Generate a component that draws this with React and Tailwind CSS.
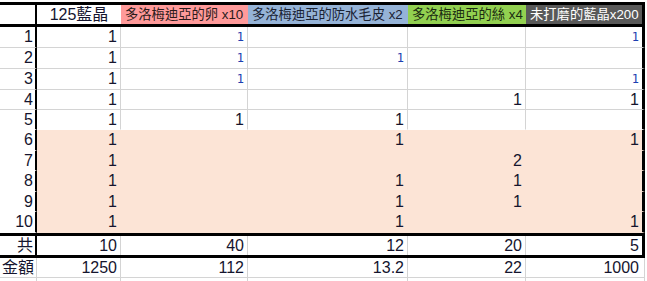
const heads = [
  { text: '多洛梅迪亞的卵 x10', cls: 'bg-[#ff9a9a] text-[#2a1a1a]' },
  { text: '多洛梅迪亞的防水毛皮 x2', cls: 'bg-[#95b3d7] text-[#1a2233]' },
  { text: '多洛梅迪亞的絲 x4', cls: 'bg-[#92d050] text-[#1a2a10]' },
  { text: '未打磨的藍晶x200', cls: 'bg-[#595959] text-white' },
];

// each cell: null | number (normal) | [number] (small, pasted-in style)
const rows = [
  { h: 'h-[21px]', c: [[1], null, null, [1]] },
  { h: 'h-[21px]', c: [[1], [1], null, null] },
  { h: 'h-[21px]', c: [[1], null, null, [1]] },
  { h: 'h-[20px]', c: [null, null, 1, 1] },
  { h: 'h-[20px]', c: [1, 1, null, null], last: true },
  { h: 'h-[21px]', c: [null, 1, null, 1], peach: true },
  { h: 'h-[20px]', c: [null, null, 2, null], peach: true },
  { h: 'h-[21px]', c: [null, 1, 1, null], peach: true },
  { h: 'h-[20px]', c: [null, 1, 1, null], peach: true },
  { h: 'h-[21px]', c: [null, 1, null, 1], peach: true },
];

const widths = ['w-[127px]', 'w-[160px]', 'w-[118px]', 'w-[119px]'];

function Val({ v }) {
  if (v === null) return null;
  if (Array.isArray(v)) {
    return <span className="font-['DejaVu_Sans_Mono',monospace] text-[12px] text-[#1d3fb0]">{v[0]}</span>;
  }
  return <span>{v}</span>;
}

export default function App() {
  return (
    <div className="w-[647px] h-[281px] bg-white overflow-hidden pt-[2px] font-['Liberation_Sans','Noto_Sans_CJK_TC',sans-serif] text-[16px] text-[#15152e] leading-none">
      <div className="w-[645px] border-t-[3px] border-black">
        {/* header */}
        <div className="flex h-[22px] border-b-[3px] border-black">
          <div className="w-[37px] border-r-2 border-black" />
          <div className="w-[84px] flex items-center justify-center">125藍晶</div>
          {heads.map((h, i) => (
            <div
              key={i}
              className={`${widths[i]} ${h.cls} flex items-center pl-[4px] text-[13.3px] whitespace-nowrap overflow-hidden ${i === 3 ? 'border-r-[3px] border-black' : ''}`}
            >
              {h.text}
            </div>
          ))}
        </div>

        {/* body rows */}
        {rows.map((r, i) => {
          const line = r.peach || r.last ? 'border-b-transparent' : 'border-b-[#d4d4d4]';
          const fill = r.peach ? 'bg-[#fce4d6] border-r-transparent' : 'border-r-[#d4d4d4]';
          return (
            <div key={i} className={`flex ${r.h}`}>
              <div className={`w-[37px] border-r-2 border-r-black border-b ${line} flex items-center justify-end pr-[2px]`}>
                {i + 1}
              </div>
              <div className={`w-[84px] border-r border-b ${fill} ${line} flex items-center justify-end pr-[3px]`}>1</div>
              {r.c.map((v, j) => (
                <div
                  key={j}
                  className={`${widths[j]} border-b ${line} flex items-center justify-end pr-[3px] ${
                    j === 3
                      ? `border-r-[3px] border-r-black ${r.peach ? 'bg-[#fce4d6]' : ''}`
                      : `border-r ${fill}`
                  }`}
                >
                  <Val v={v} />
                </div>
              ))}
            </div>
          );
        })}

        {/* total */}
        <div className="flex h-[25px] border-y-[3px] border-black">
          <div className="w-[37px] border-r-2 border-black flex items-center justify-end pr-[2px]">共</div>
          <div className="w-[84px] border-r border-[#d4d4d4] flex items-center justify-end pr-[3px]">10</div>
          <div className="w-[127px] border-r border-[#d4d4d4] flex items-center justify-end pr-[3px]">40</div>
          <div className="w-[160px] border-r border-[#d4d4d4] flex items-center justify-end pr-[3px]">12</div>
          <div className="w-[118px] border-r border-[#d4d4d4] flex items-center justify-end pr-[3px]">20</div>
          <div className="w-[119px] border-r-[3px] border-black flex items-center justify-end pr-[3px]">5</div>
        </div>

        {/* price */}
        <div className="flex h-[20px] border-b border-[#d4d4d4]">
          <div className="w-[37px] border-r border-[#d4d4d4] flex items-center justify-end pr-[2px]">金額</div>
          <div className="w-[84px] border-r border-[#d4d4d4] flex items-center justify-end pr-[3px]">1250</div>
          <div className="w-[127px] border-r border-[#d4d4d4] flex items-center justify-end pr-[3px]">112</div>
          <div className="w-[160px] border-r border-[#d4d4d4] flex items-center justify-end pr-[3px]">13.2</div>
          <div className="w-[118px] border-r border-[#d4d4d4] flex items-center justify-end pr-[3px]">22</div>
          <div className="w-[119px] border-r border-[#d4d4d4] flex items-center justify-end pr-[5px]">1000</div>
        </div>

        {/* tail gridlines */}
        <div className="flex h-[4px]">
          <div className="w-[37px] border-r border-[#d4d4d4]" />
          <div className="w-[84px] border-r border-[#d4d4d4]" />
          <div className="w-[127px] border-r border-[#d4d4d4]" />
          <div className="w-[160px] border-r border-[#d4d4d4]" />
          <div className="w-[118px] border-r border-[#d4d4d4]" />
          <div className="w-[119px] border-r border-[#d4d4d4]" />
        </div>
      </div>
    </div>
  );
}
